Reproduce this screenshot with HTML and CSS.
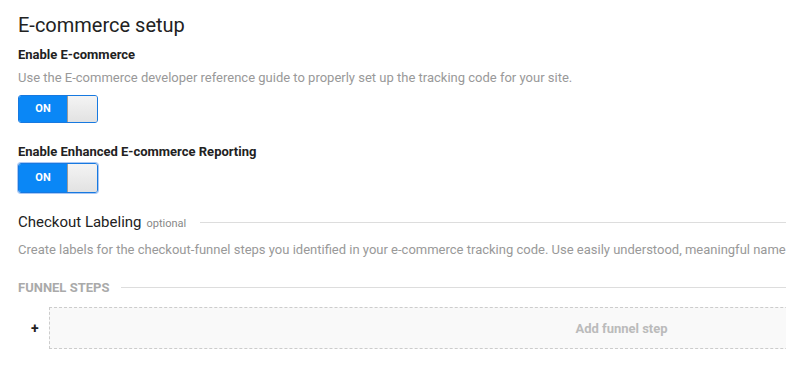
FILE: index.html
```html
<!DOCTYPE html>
<html>
<head>
<meta charset="utf-8">
<link rel="stylesheet" href="styles.css">
</head>
<body>
<div class="page">
  <h1 class="title">E-commerce setup</h1>
  <div class="field">
    <div class="label">Enable E-commerce</div>
    <div class="desc">Use the E-commerce developer reference guide to properly set up the tracking code for your site.</div>
    <div class="toggle"><span class="on">ON</span><span class="knob"></span></div>
  </div>
  <div class="field field2">
    <div class="label">Enable Enhanced E-commerce Reporting</div>
    <div class="toggle focused"><span class="on">ON</span><span class="knob"></span></div>
  </div>
  <div class="section-head">
    <span class="section-title">Checkout Labeling</span>
    <span class="optional">optional</span>
    <span class="rule"></span>
  </div>
  <div class="section-desc">Create labels for the checkout-funnel steps you identified in your e-commerce tracking code. Use easily understood, meaningful names that will appear in your reports.</div>
  <div class="sub-head">
    <span class="sub-title">FUNNEL STEPS</span>
    <span class="rule"></span>
  </div>
  <div class="step-row">
    <span class="plus">+</span>
    <div class="add-step">Add funnel step</div>
  </div>
</div>
</body>
</html>
```
FILE: styles.css
```css
html, body {
  margin: 0;
  padding: 0;
  background: #fff;
  overflow: hidden;
}
body {
  font-family: Roboto, "Liberation Sans", Arial, sans-serif;
  color: #222;
}
.page {
  width: 1176px;
  padding: 12px 0 0 18px;
}
.title {
  margin: 0;
  font-size: 20px;
  font-weight: 400;
  line-height: 26px;
  color: #222;
}
.field {
  margin-top: 9px;
}
.label {
  font-size: 13px;
  font-weight: 700;
  line-height: 16px;
  color: #222;
}
.desc {
  margin-top: 7px;
  font-size: 13px;
  line-height: 16px;
  color: #999;
  white-space: nowrap;
}
.toggle {
  margin-top: 9px;
  display: flex;
  width: 80px;
  height: 28px;
  box-sizing: border-box;
  border-radius: 3px;
  overflow: hidden;
  border: 1px solid #1779e0;
}
.toggle.focused {
  box-shadow: 0 0 0 1px #a9c8f5;
}
.on {
  width: 48px;
  background: #0a87f6;
  color: #fff;
  font-size: 11px;
  font-weight: 700;
  line-height: 26px;
  text-align: center;
}
.knob {
  flex: 1;
  background: linear-gradient(#f4f4f4, #e2e2e2);
  border: 1px solid #a8a8a8;
  border-left: 1px solid #9a9a9a;
  margin: -1px -1px -1px 0;
  border-radius: 0 3px 3px 0;
}
.field2 {
  margin-top: 21px;
}
.field2 .toggle {
  margin-top: 3px;
  height: 30px;
}
.field2 .on { line-height: 28px; }
.section-head {
  display: flex;
  align-items: baseline;
  margin-top: 17px;
  height: 24px;
}
.section-title {
  font-size: 15px;
  line-height: 24px;
  color: #222;
}
.optional {
  font-size: 11px;
  color: #888;
  margin-left: 5px;
}
.section-head .rule {
  flex: 1;
  align-self: center;
  margin-left: 14px;
  height: 1px;
  background: #ddd;
}
.section-desc {
  margin-top: 8px;
  font-size: 13px;
  line-height: 16px;
  color: #999;
  white-space: nowrap;
}
.sub-head {
  display: flex;
  align-items: center;
  margin-top: 22px;
  height: 14px;
}
.sub-title {
  font-size: 13px;
  font-weight: 700;
  color: #aaa;
}
.sub-head .rule {
  flex: 1;
  height: 1px;
  background: #ddd;
  margin-left: 12px;
}
.step-row {
  display: flex;
  align-items: center;
  margin-top: 13px;
}
.plus {
  width: 31px;
  padding-left: 13px;
  box-sizing: border-box;
  font-size: 14px;
  font-weight: 700;
  color: #222;
}
.add-step {
  flex: 1;
  height: 42px;
  box-sizing: border-box;
  border: 1px dashed #ccc;
  background: #f9f9f9;
  display: flex;
  align-items: center;
  justify-content: center;
  font-size: 13px;
  font-weight: 700;
  color: #bbb;
}
```
